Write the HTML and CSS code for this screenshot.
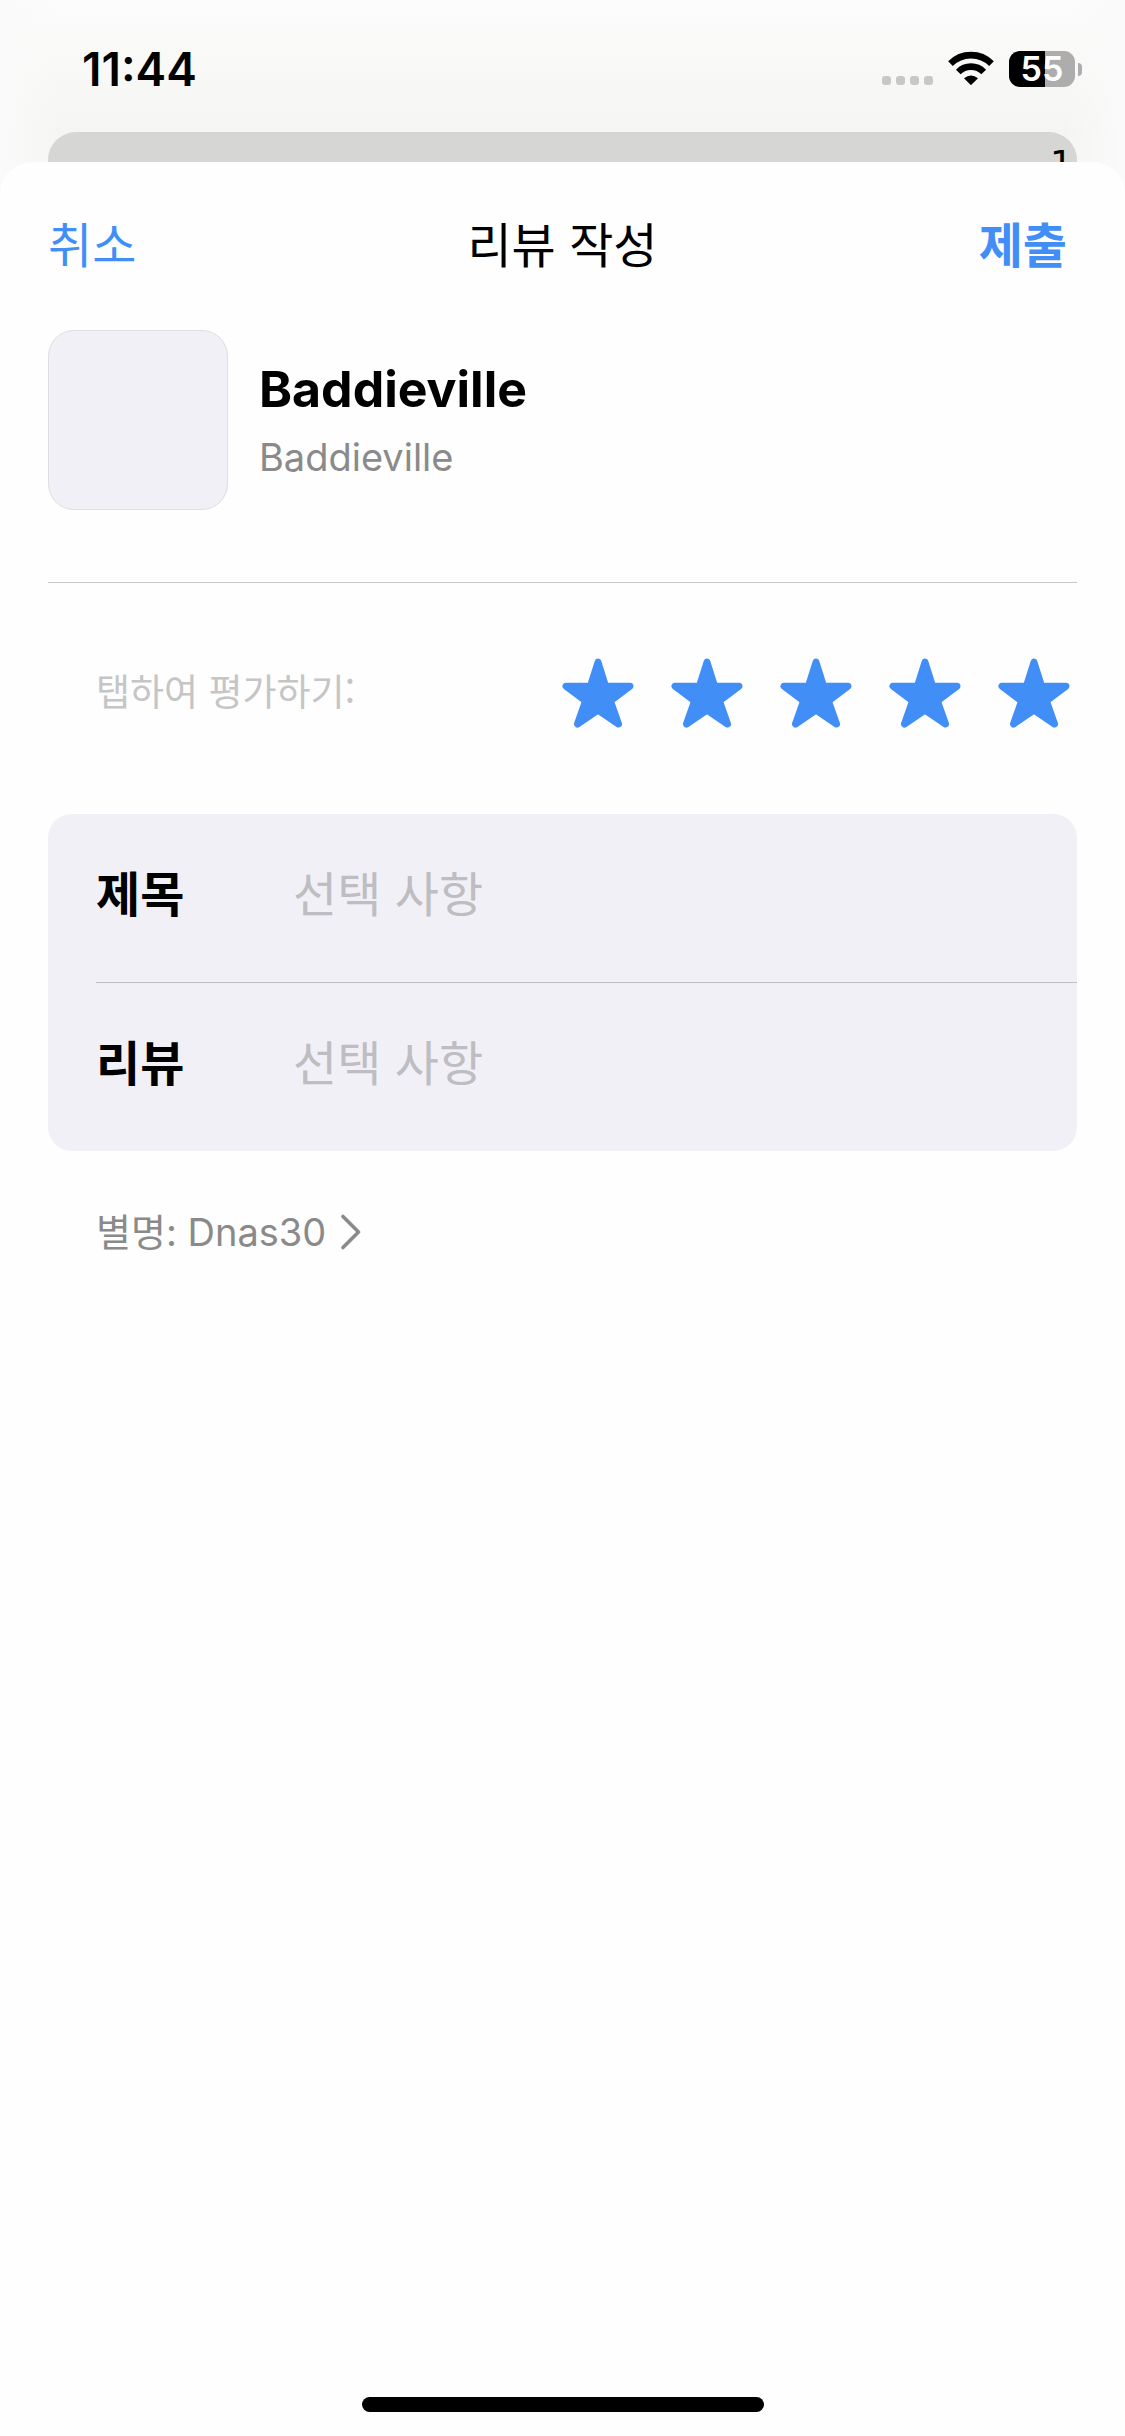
FILE: index.html
```html
<!DOCTYPE html>
<html lang="ko">
<head>
<meta charset="utf-8">
<meta name="viewport" content="width=device-width, initial-scale=1">
<title>리뷰 작성</title>
<link rel="stylesheet" href="styles.css">
</head>
<body>
<div class="screen">
  <header class="status">
    <span class="time">11:44</span>
    <div class="indicators">
      <svg class="signal" width="52" height="36" viewBox="0 0 52 36" fill="#c8c8c7" aria-hidden="true">
        <rect x="0" y="25" width="9" height="9" rx="3"/><rect x="14" y="25" width="9" height="9" rx="3"/><rect x="28" y="25" width="9" height="9" rx="3"/><rect x="42" y="25" width="9" height="9" rx="3"/>
      </svg>
      <svg class="wifi" width="46" height="36" viewBox="0 0 46 36" aria-hidden="true">
        <g fill="none" stroke="#000" stroke-width="6.6"><path d="M2.5 12.6A29 29 0 0 1 43.5 12.6"/><path d="M10.3 21A17.8 17.8 0 0 1 35.7 21"/></g>
        <path d="M16 27.3Q23 21.500 30 27.300L23.700 33.600Q23 34.300 22.300 33.600Z"/>
      </svg>
      <div class="battery"><span class="level">55</span><span class="nub"></span></div>
    </div>
  </header>
  <div class="behind"><span class="peek">1</span></div>
  <main class="sheet">
    <nav class="bar">
      <button class="action" type="button">취소</button>
      <h1 class="title">리뷰 작성</h1>
      <button class="action submit" type="submit" form="review">제출</button>
    </nav>
    <section class="app">
      <div class="icon"></div>
      <div class="names">
        <h2 class="name">Baddieville</h2>
        <p class="maker">Baddieville</p>
      </div>
    </section>
    <form class="review" id="review">
      <div class="rating" role="radiogroup" aria-labelledby="rate">
        <span class="hint" id="rate">탭하여 평가하기:</span>
        <div class="stars">
          <label class="star"><input type="radio" name="stars" value="1" aria-label="1"><svg viewBox="0 0 72 70"><use href="#star"/></svg></label>
          <label class="star"><input type="radio" name="stars" value="2" aria-label="2"><svg viewBox="0 0 72 70"><use href="#star"/></svg></label>
          <label class="star"><input type="radio" name="stars" value="3" aria-label="3"><svg viewBox="0 0 72 70"><use href="#star"/></svg></label>
          <label class="star"><input type="radio" name="stars" value="4" aria-label="4"><svg viewBox="0 0 72 70"><use href="#star"/></svg></label>
          <label class="star"><input type="radio" name="stars" value="5" aria-label="5" checked><svg viewBox="0 0 72 70"><path id="star" d="M36 4.200L43.600 28.200H68L48.400 43L56.500 66L36 52.200L15.500 66L23.600 43L4 28.200H28.400Z"/></svg></label>
        </div>
      </div>
      <div class="fields">
        <div class="row"><label class="label" for="subject">제목</label><input class="input" id="subject" type="text" placeholder="선택 사항"></div>
        <div class="row"><label class="label" for="body">리뷰</label><input class="input" id="body" type="text" placeholder="선택 사항"></div>
      </div>
    </form>
    <a class="nick" href="#">별명: Dnas30
      <svg width="20" height="36" viewBox="0 0 20 36" fill="none" stroke="#8a8a8a" stroke-width="3.600" stroke-linecap="round" stroke-linejoin="round" aria-hidden="true"><path d="M2 2.500L17.500 18L2 33.500"/></svg>
    </a>
    <div class="home"></div>
  </main>
</div>
</body>
</html>
```
FILE: styles.css
```css
* { box-sizing: border-box; }
body, h1, h2, p { margin: 0; }
body { font-family: Inter, "Noto Sans CJK KR", sans-serif; color: #000; }
button, input { font: inherit; color: inherit; background: none; border: 0; padding: 0; }

.screen {
  min-height: 100vh;
  display: flex;
  flex-direction: column;
  background:
    linear-gradient(90deg, #fafafa, #fafafa00 60px calc(100% - 60px), #fafafa),
    linear-gradient(#fcfcfc, #f5f5f3 132px);
}

.status {
  display: flex;
  justify-content: space-between;
  align-items: center;
  padding: 51px 43px 45px 82px;
}
.time { font-size: 46px; line-height: 36px; font-weight: 600; }
.indicators { display: flex; height: 36px; }
.wifi { margin: 0 15px 0 14px; }
.battery { display: flex; align-items: center; gap: 3px; }
.level {
  width: 66px;
  border-radius: 11px;
  background: linear-gradient(90deg, #000 36px, #adadad 36px);
  color: #fff;
  font-size: 34px;
  line-height: 36px;
  font-weight: 600;
  text-align: center;
}
.nub { width: 4px; height: 13px; border-radius: 0 6px 6px 0; background: #adadad; }

.behind {
  height: 30px;
  margin: 0 48px;
  padding: 14px 4px 0;
  border-radius: 28px 28px 0 0;
  background: #d6d6d4;
  overflow: hidden;
  text-align: right;
}
.peek { display: block; font: 36px/36px "DejaVu Sans", sans-serif; }

.sheet {
  flex: 1;
  display: flex;
  flex-direction: column;
  padding: 0 48px 24px;
  border-radius: 32px 32px 0 0;
  background: #fefefe;
}
.bar, .hint, .row { font-family: "Noto Sans CJK KR", sans-serif; }
.bar {
  display: grid;
  grid-template-columns: 1fr auto 1fr;
  align-items: center;
  height: 168px;
  padding-bottom: 8px;
  font-size: 48px;
  line-height: 60px;
}
.action { justify-self: start; color: #418ef7; cursor: pointer; }
.submit { justify-self: end; padding-right: 10px; font-weight: 700; }
.title { font-size: 48px; font-weight: 400; }

.app {
  display: flex;
  align-items: center;
  gap: 31px;
  padding-bottom: 72px;
  border-bottom: 1px solid #c8c8c8;
}
.icon {
  width: 180px;
  height: 180px;
  border: 1px solid #dedee0;
  border-radius: 26px;
  background: #f1f0f6;
}
.names { padding-top: 6px; }
.name { font-size: 50px; line-height: 68px; font-weight: 700; }
.maker { font-size: 38px; line-height: 68px; color: #8a8a8a; }

.rating {
  display: flex;
  justify-content: space-between;
  align-items: center;
  height: 231px;
  padding: 0 7px 12px 48px;
}
.hint { padding-bottom: 6px; font-size: 37px; line-height: 60px; color: #c5c5c5; }
.stars { display: flex; gap: 37px; }
.star { display: grid; cursor: pointer; }
.star > * { grid-area: 1 / 1; }
.star input { appearance: none; margin: 0; }
.star svg { width: 72px; height: 70px; fill: #418ef7; stroke: #418ef7; stroke-width: 7; stroke-linejoin: round; }

.fields {
  padding-left: 48px;
  border-radius: 24px;
  background: #f1f0f6;
}
.row {
  display: flex;
  align-items: center;
  height: 168px;
  padding-bottom: 14px;
  font-size: 48px;
  line-height: 60px;
}
.row + .row { height: 169px; border-top: 1px solid #bebec3; }
.label { width: 197px; font-weight: 700; }
.input { flex: 1; min-width: 0; height: 60px; outline: 0; }
.input::placeholder { color: #bdbdc2; opacity: 1; }

.nick {
  align-self: flex-start;
  display: flex;
  align-items: center;
  gap: 15px;
  margin: 48px 0 0 48px;
  font-size: 38px;
  line-height: 66px;
  color: #8a8a8a;
  text-decoration: none;
}
.home {
  width: 402px;
  height: 15px;
  margin: auto auto 0;
  border-radius: 8px;
  background: #000;
}
```
